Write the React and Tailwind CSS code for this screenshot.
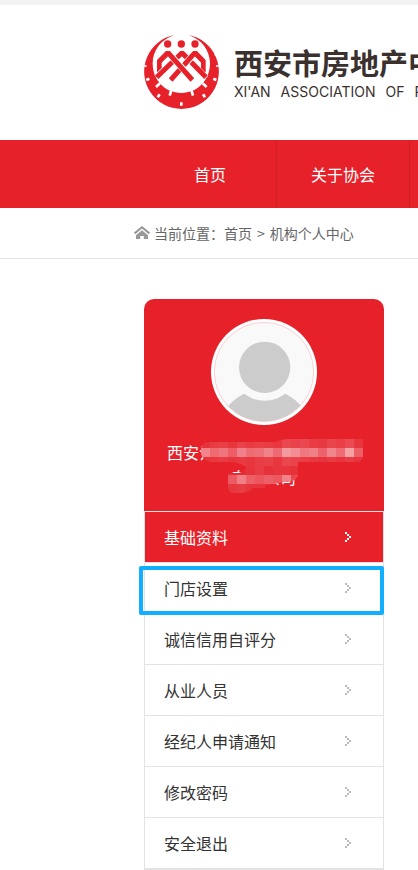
import React from 'react';

// --- Configuration ---
const navItems = ['首页', '关于协会'];

const menuItems = [
  { label: '基础资料', active: true },
  { label: '门店设置', marked: true },
  { label: '诚信信用自评分' },
  { label: '从业人员' },
  { label: '经纪人申请通知' },
  { label: '修改密码' },
  { label: '安全退出' },
];

// One string per tile row, 9px tiles; empty entries stay transparent
const mosaicRows = [
  ['#e7343c', '#e93b43', '#e93f47', '#e8363e', '#ea434b', '#e93b43', '#ea4149', '#e93d45', '#e8373f', '#ea474f', '#e9424a', '#ea4850', '#e93c44', '#e73941', '#ea454d', '#e93e46', '#eb4c54', '#e8363e'],
  ['#f1848a', '#ee6b72', '#ef757c', '#ec5d65', '#f0808a', '#ee6d75', '#ee7077', '#f0838a', '#ee6a72', '#f49a9e', '#f28d93', '#ef7880', '#f08088', '#ed636b', '#f0858d', '#ee6d75', '#f5a2a6', '#ed5f67'],
  ['#e8353d', '#e83840', '#e93b43', '#e8363e', '#e93a42', '#e8363e', '#e93d45', '#e93f47', '#e8373f', '#ea464e', '#ea434b', '#e93e46', '#e8373f', '#e8343c', '#e93a42', '#e8353d', '#e93c44', '#e8343c'],
  ['', '', '', '#e62d35', '#e62d35', '#e7343c', '#e93d45', '#e7313a', '#e8363e', '#e8343c', '#e7313a'],
  ['', '', '', '#ec5b63', '#f17f86', '#ed6068', '#ec555d', '#ed5f67', '#ec5860', '#f0828a', '#ea474f'],
  ['', '', '', '#e73840', '#e83c44', '#e7353d', '#e7353d', '#e7353d', '#e7353d', '#e7353d', '#e7353d'],
];

const Emblem = () => (
  <svg className="size-[76px] shrink-0" viewBox="42 42 228 228" aria-hidden="true">
    {/* Crescent gear ring */}
    <path
      fill="#e6212a"
      fillRule="evenodd"
      d="M133 45A112 112 0 1 0 176 45C214 58 240 90 240 130C240 180 203 219 154 219C105 219 68 180 68 130C68 90 94 58 133 45Z"
    />
    {/* Slots and notches in the ring */}
    <g stroke="#fff" strokeWidth="8">
      <path d="M154 247v10M89 223l-6 9M219 223l6 9M58 176l-9 4M250 176l9 4" />
      <path strokeWidth="5" d="M50 138h-8M258 138h8M54 106l-8-3M254 106l8-3" />
      <path d="M124 210l-5 17M184 210l5 17M90 190l-12 11M218 190l12 11" />
    </g>
    {/* Heads */}
    <g fill="#e6212a">
      <circle cx="113" cy="72" r="11" />
      <circle cx="154" cy="72" r="11" />
      <circle cx="195" cy="72" r="11" />
    </g>
    {/* Interlocking roofs */}
    <g fill="none" strokeLinejoin="bevel">
      <path stroke="#e6212a" strokeWidth="14" d="M88 156V124L114 97M220 156V124L194 97" />
      <path stroke="#fff" strokeWidth="20" d="M80 172L156 99l72 75" />
      <path stroke="#e6212a" strokeWidth="15" d="M80 172L156 98l72 74" />
      <path stroke="#fff" strokeWidth="20" d="M188 107l-66 71" />
      <path stroke="#e6212a" strokeWidth="15" d="M222 126L195 98l-73 82" />
      <path stroke="#fff" strokeWidth="20" d="M126 111l62 67" />
      <path stroke="#e6212a" strokeWidth="15" d="M86 126L114 98l73 82" />
    </g>
  </svg>
);

const HomeIcon = () => (
  <svg className="h-[14px] w-4 shrink-0" viewBox="0 0 16 14" aria-hidden="true">
    <path fill="none" stroke="#999" strokeWidth="2" d="M.6 7.400L8 1.200l7.400 6.200" />
    <path fill="#999" d="M8 4.200l6 5V13H9.800v-3H6.200v3H2V9.200z" />
  </svg>
);

const Arrow = () => (
  <svg className="h-[10px] w-[6px]" viewBox="0 0 6 10" shapeRendering="crispEdges" fill="currentColor" aria-hidden="true">
    <path d="M0 0h2v2H0zM2 2h2v2H2zM4 4h2v2H4zM2 6h2v2H2zM0 8h2v2H0z" />
  </svg>
);

const Avatar = () => (
  <svg className="size-[106px]" viewBox="243 87 318 318" role="img" aria-label="头像">
    <defs>
      <clipPath id="avatar-face">
        <circle cx="402" cy="246" r="148" />
      </clipPath>
      <mask id="avatar-gap">
        <rect x="243" y="87" width="318" height="318" fill="#fff" />
        <circle cx="404" cy="232" r="100" fill="#000" />
      </mask>
    </defs>
    <circle cx="402" cy="246" r="159" fill="#fff" />
    <circle cx="402" cy="246" r="149" fill="#f9f9f9" stroke="#f6b9bc" strokeWidth="2" />
    <g clipPath="url(#avatar-face)" fill="#ccc">
      <circle cx="404" cy="232" r="77" />
      <circle cx="404" cy="440" r="143" mask="url(#avatar-gap)" />
    </g>
  </svg>
);

// Pixelated smear that hides most of the company name
const Mosaic = () => (
  <svg className="absolute -top-px left-[57px] h-[54px] w-[162px]" viewBox="0 0 162 54" aria-hidden="true">
    <defs>
      <clipPath id="smear">
        <path d="M0 9Q1 3 8 3H75Q80 0 88 0H162V18Q161 23 156 23H97V37Q94 43 84 43Q74 45 64 46V49H52Q47 54 40 54H34Q27 54 27 48V34H38Q43 32 45 28Q38 23 27 23H9Q2 21 0 15Z" />
      </clipPath>
    </defs>
    <g clipPath="url(#smear)" shapeRendering="crispEdges">
      {mosaicRows.map((row, y) =>
        row.map((fill, x) => fill && <rect key={`${x}-${y}`} x={x * 9} y={y * 9} width="9" height="9" fill={fill} />)
      )}
    </g>
  </svg>
);

const Header = () => (
  <header>
    <div className="h-[5px] bg-[#f3f3f3]" />
    <a href="#" className="flex h-[135px] items-center gap-[14px] overflow-hidden pb-0.5 pl-36 text-[#3a302e] whitespace-nowrap">
      <Emblem />
      <span className="flex flex-col pt-1">
        <span className="text-[29px] leading-9 font-bold">西安市房地产中</span>
        <span className="flex gap-2.5 font-[Inter] text-sm leading-6">
          <span>XI'AN</span>
          <span>ASSOCIATION</span>
          <span>OF</span>
          <span>R</span>
        </span>
      </span>
    </a>
    <nav className="flex overflow-hidden bg-[#e6212a] pl-36">
      {navItems.map((item) => (
        <a
          key={item}
          href="#"
          className="flex h-[68px] w-[133px] shrink-0 items-center justify-center border-r border-[#cf1f27] text-base text-white"
        >
          {item}
        </a>
      ))}
    </nav>
  </header>
);

const Breadcrumb = () => (
  <div className="flex h-[51px] items-center border-b border-[#e3e3e3] pl-[134px] text-sm text-[#666] whitespace-nowrap">
    <HomeIcon />
    <span className="pl-1">当前位置：</span>
    <a href="#">首页</a>
    <span className="px-[5px]">&gt;</span>
    <a href="#">机构个人中心</a>
  </div>
);

const Sidebar = () => (
  <aside className="mt-10 ml-36 w-60">
    <div className="flex flex-col items-center rounded-t-[10px] bg-[#e6212a] pt-5 pb-[21px] text-white">
      <Avatar />
      <div className="relative mt-[15px] w-full text-base leading-[25px]">
        <p className="pl-[23px]">西安氵</p>
        <p className="text-center">有限公司</p>
        <Mosaic />
      </div>
    </div>

    <ul className="border border-[#e3e3e3]">
      {menuItems.map(({ label, active, marked }) => (
        <li key={label} className="relative border-b border-[#e3e3e3]">
          <a
            href="#"
            className={`flex h-[50px] items-center justify-between pr-8 pl-[19px] text-base ${
              active ? 'bg-[#e6212a] text-white' : 'text-[#333]'
            }`}
          >
            {label}
            <span className={active ? 'text-white' : 'text-[#bbb]'}>
              <Arrow />
            </span>
          </a>
          {/* Blue highlight frame */}
          {marked && (
            <span className="pointer-events-none absolute top-[3px] -right-px -bottom-[2px] -left-[6px] rounded-xs border-4 border-[#12aeff]" />
          )}
        </li>
      ))}
    </ul>
  </aside>
);

const App = () => (
  <div className="overflow-hidden bg-white font-['Noto_Sans_CJK_SC',sans-serif]">
    <Header />
    <Breadcrumb />
    <Sidebar />
  </div>
);

export default App;
